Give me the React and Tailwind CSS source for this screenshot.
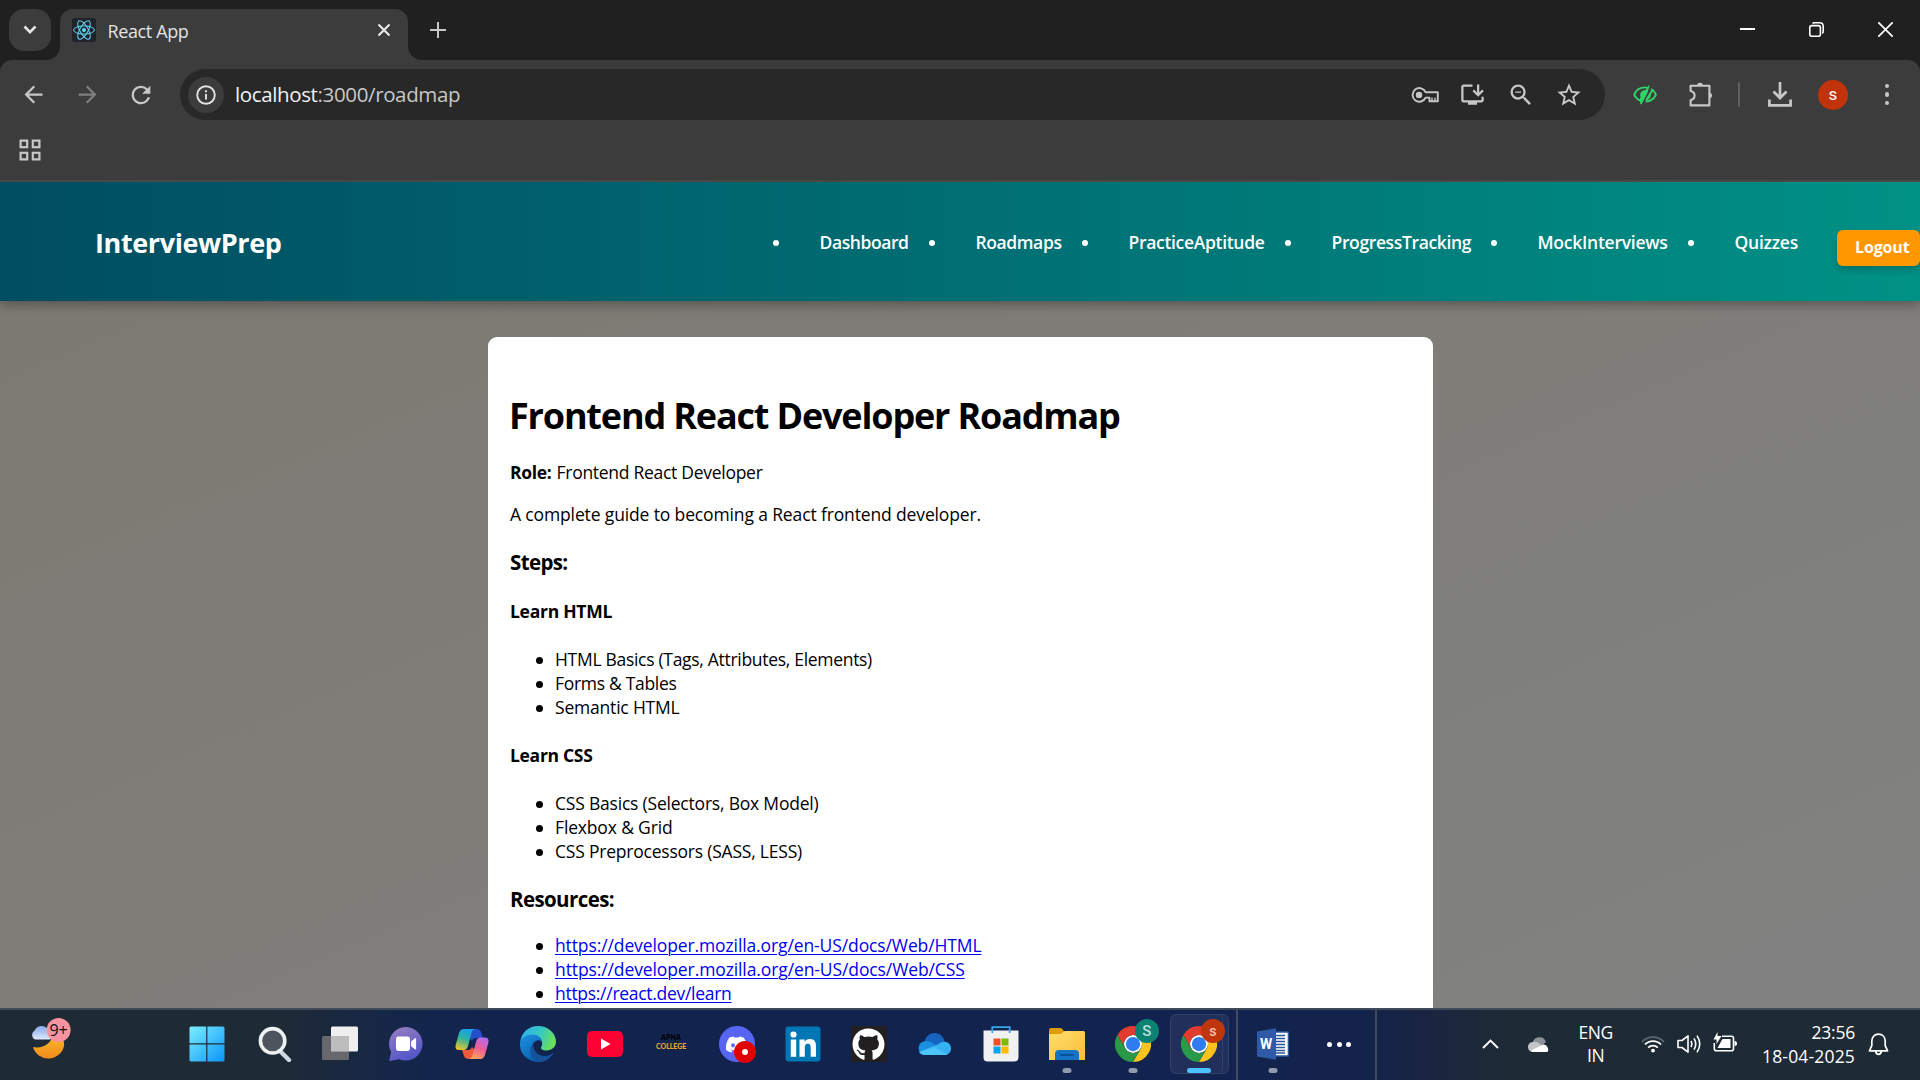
import { FaDiscord, FaGithub } from "react-icons/fa";
import {
  MdInstallDesktop,
  MdStarBorder,
  MdZoomOut,
  MdArrowBack,
  MdArrowForward,
  MdRefresh,
} from "react-icons/md";

/* ---------- browser chrome ---------- */

function ReactLogo() {
  return (
    <svg viewBox="0 0 24 24" className="h-6 w-6 rounded-[3px] bg-[#20232a]">
      <g fill="none" stroke="#61dafb" strokeWidth="1">
        <ellipse cx="12" cy="12" rx="10.4" ry="4.1" />
        <ellipse cx="12" cy="12" rx="10.4" ry="4.1" transform="rotate(60 12 12)" />
        <ellipse cx="12" cy="12" rx="10.4" ry="4.1" transform="rotate(120 12 12)" />
      </g>
      <circle cx="12" cy="12" r="2" fill="#61dafb" />
    </svg>
  );
}

function TabFlare({ flip }) {
  return (
    <svg viewBox="0 0 14 14" className={flip ? "h-3.5 w-3.5 self-end -scale-x-100" : "h-3.5 w-3.5 self-end"}>
      <path d="M14 0V14H0A14 14 0 0 0 14 0Z" fill="#3c3c3c" />
    </svg>
  );
}

function TabStrip() {
  return (
    <div className="flex h-[60px] bg-[#202020]">
      <div className="ml-[9px] mt-[9px] flex h-[42px] w-[42px] items-center justify-center rounded-[15px] bg-[#3c3c3c]">
        <svg viewBox="0 0 14 10" className="h-[10px] w-[14px]" fill="none" stroke="#e6e6e6" strokeWidth="2.6">
          <path d="M1.5 1.5L7 7.2L12.5 1.5" />
        </svg>
      </div>
      <div className="-ml-[5px] flex">
        <TabFlare />
        <div className="mt-[9px] flex h-[51px] w-[348px] items-center rounded-t-[13px] bg-[#3c3c3c] pb-[9px] pl-3">
          <ReactLogo />
          <span className="ml-[11.5px] mt-[2px] text-[18px] leading-6 tracking-[-0.0206em] text-[#e3e3e3]">React App</span>
          <svg viewBox="0 0 14 14" className="ml-auto mr-[17px] h-[14px] w-[14px]" stroke="#e6e6e6" strokeWidth="2.2">
            <path d="M1.5 1.5L12.5 12.5M12.5 1.5L1.5 12.5" />
          </svg>
        </div>
        <TabFlare flip />
      </div>
      <svg viewBox="0 0 16 16" className="ml-2 mt-[22px] h-4 w-4" stroke="#c7c7c7" strokeWidth="2">
        <path d="M8 0V16M0 8H16" />
      </svg>
      <div className="ml-auto mr-[27px] flex h-[59px] items-center gap-[54px]">
        <svg viewBox="0 0 15 15" className="h-[15px] w-[15px]" stroke="#fff" strokeWidth="2">
          <path d="M0 7H15" />
        </svg>
        <svg viewBox="0 0 15 15" className="h-[15px] w-[15px]" fill="none" stroke="#fff" strokeWidth="1.6">
          <rect x="0.8" y="3.6" width="10.6" height="10.6" rx="2" />
          <path d="M3.6 1.6Q4.2 0.8 5.4 0.8H10.6Q14.2 0.8 14.2 4.4V9.6Q14.2 10.8 13.2 11.4" />
        </svg>
        <svg viewBox="0 0 15 15" className="h-[15px] w-[15px]" stroke="#fff" strokeWidth="1.7">
          <path d="M0.3 0.3L14.7 14.7M14.7 0.3L0.3 14.7" />
        </svg>
      </div>
    </div>
  );
}

function Toolbar() {
  return (
    <div className="bg-[#202020]">
      <div className="h-[122px] rounded-t-[12px] border-b-2 border-[#4a4846] bg-[#3c3c3c] pt-[9px]">
        <div className="flex h-[51px] items-center">
          <MdArrowBack className="ml-[20px] h-[27px] w-[27px] text-[#c7c7c7]" />
          <MdArrowForward className="ml-[27px] h-[27px] w-[27px] text-[#7f7f7f]" />
          <MdRefresh className="ml-[26px] h-[28px] w-[28px] text-[#c7c7c7]" />
          <div className="ml-[25px] flex h-[51px] w-[1425px] items-center rounded-full bg-[#282828] text-[#c7c7c7]">
            <div className="ml-[8px] flex h-9 w-9 items-center justify-center rounded-full bg-[#3c3c3c]">
              <svg viewBox="0 0 20 20" className="h-5 w-5" fill="none" stroke="#e3e3e3" strokeWidth="1.9">
                <circle cx="10" cy="10" r="8.8" />
                <path d="M10 9V14.6M10 5.2V7.2" />
              </svg>
            </div>
            <span className="ml-[11px] -mt-px text-[20.5px] leading-7 tracking-[-0.018em] text-[#c7c7c7]">
              <span className="text-[#f1f1f1]">localhost</span>:3000/roadmap
            </span>
            <div className="ml-auto mr-[22px] flex items-center">
              <svg viewBox="0 0 28 16" className="h-4 w-7" fill="none" stroke="#c7c7c7" strokeWidth="1.9" strokeLinejoin="round">
                <path d="M14.6 5.2A6.8 6.8 0 1 0 14.6 10.6H18.5V14.2H26.8V5.2Z" />
                <path d="M21 14V10.4M24 14V10.4" strokeWidth="1.4" />
                <circle cx="8" cy="7.9" r="3.2" fill="#c7c7c7" stroke="none" />
              </svg>
              <MdInstallDesktop className="ml-[20px] h-[27px] w-[27px]" />
              <MdZoomOut className="ml-[21px] h-[28px] w-[28px]" />
              <MdStarBorder className="ml-[20px] h-[28px] w-[28px]" />
            </div>
          </div>
          <svg viewBox="0 0 24 20" className="ml-[28px] h-5 w-6" fill="none" stroke="#2fd566" strokeWidth="1.9">
            <path d="M7.6 15.8C4.8 14.7 2.4 12.4 1.2 9.7C3 5 7.5 2.4 12 2.4C13 2.4 14 2.5 14.8 2.8M18 4C20.2 5.2 21.9 7.2 22.9 9.7C21 14.3 17.2 16.4 12.6 16.6" />
            <path d="M16 0.6L13.8 8.4L8 19.2L7.2 14Z" fill="#2fd566" strokeWidth="1" />
            <path d="M20 4.2L13 15.6M17 9.5Q17 13 13.2 14.5" />
            <path d="M13 5.2C9.6 5 7.2 7 7.2 10C7.2 11.8 7.8 13 8.8 13.8L12.8 7.6Z" fill="#2fd566" stroke="none" />
          </svg>
          <svg viewBox="0 0 26 26" className="ml-[31px] h-[26px] w-[26px]" fill="none" stroke="#c7c7c7" strokeWidth="2.1">
            <path d="M2.6 3.8H21.4V23.4H2.6V18.2C5.2 17.6 6.6 15.8 6.6 13.6C6.6 11.4 5.2 9.6 2.6 9Z" strokeLinejoin="round" />
            <path d="M8.9 3.2A3.2 3.2 0 0 1 15.1 3.2ZM22 10.6A3.2 3.2 0 0 1 22 16.6Z" fill="#c7c7c7" stroke="none" />
          </svg>
          <div className="ml-[24px] h-[25px] w-[2px] rounded bg-[#5f5f5f]" />
          <svg viewBox="0 0 24 25" className="ml-[28px] h-[25px] w-6" fill="none" stroke="#c7c7c7" strokeWidth="2.7">
            <path d="M12 0V15M5.5 9.5L12 16L18.5 9.5M1.4 17.5V23.4H22.6V17.5" />
          </svg>
          <div className="ml-[26px] flex h-[30px] w-[30px] items-center justify-center rounded-full bg-[#c0330b] text-[17px] leading-none text-white [font-family:Roboto,sans-serif]">
            s
          </div>
          <div className="ml-[36.5px] flex flex-col gap-1">
            <i className="h-[4.5px] w-[4.5px] rounded-full bg-[#c7c7c7]" />
            <i className="h-[4.5px] w-[4.5px] rounded-full bg-[#c7c7c7]" />
            <i className="h-[4.5px] w-[4.5px] rounded-full bg-[#c7c7c7]" />
          </div>
        </div>
        <svg viewBox="0 0 22 22" className="ml-[19px] mt-[19px] h-[22px] w-[22px]" fill="none" stroke="#c7c7c7" strokeWidth="2.2">
          <rect x="1.6" y="1.6" width="6.6" height="6.6" />
          <rect x="13.8" y="1.6" width="6.6" height="6.6" />
          <rect x="1.6" y="13.8" width="6.6" height="6.6" />
          <rect x="13.8" y="13.8" width="6.6" height="6.6" />
        </svg>
      </div>
    </div>
  );
}

/* ---------- web page ---------- */

const NAV = [
  ["Dashboard", "w-[156px]", "tracking-[-0.0241em]"],
  ["Roadmaps", "w-[153px]", "tracking-[-0.0226em]"],
  ["PracticeAptitude", "w-[203px]", "tracking-[-0.0179em]"],
  ["ProgressTracking", "w-[206px]", "tracking-[-0.021em]"],
  ["MockInterviews", "w-[197px]", "tracking-[-0.0148em]"],
  ["Quizzes", "w-[149px]", "tracking-[-0.0132em]"],
];

function Header() {
  return (
    <header className="relative flex h-[119px] items-center bg-linear-to-r from-[#004d61] to-[#009185] pt-[1px] text-white shadow-[0_4px_10px_rgba(0,0,0,0.3)]">
      <h1 className="ml-[95px] mt-px w-[678px] text-[27px] font-bold leading-9 tracking-[-0.0145em]">InterviewPrep</h1>
      <ul className="flex">
        {NAV.map(([label, width, tracking]) => (
          <li key={label} className={`${width} flex items-center`}>
            <i className="mt-px h-1.5 w-1.5 rounded-full bg-white" />
            <a className={`${tracking} ml-[40.5px] text-[17.5px] font-semibold leading-6`}>{label}</a>
          </li>
        ))}
      </ul>
      <button className="mt-[11px] h-9 w-[83px] rounded-[6px] bg-[#ff9800] pb-px pl-[18px] text-left text-[16px] font-bold tracking-[-0.0089em] shadow-[0_4px_6px_rgba(0,0,0,0.2)]">
        Logout
      </button>
    </header>
  );
}

function Bullets({ items, link, className }) {
  return (
    <ul className={`${className} text-[17.5px] leading-6`}>
      {items.map(([text, tracking]) => (
        <li key={text} className="flex items-center">
          <i className="ml-[25.5px] mt-[2px] h-[7px] w-[7px] rounded-full bg-black" />
          <span
            className={
              link
                ? `${tracking} ml-[12.5px] text-[#0000ee] underline decoration-1 underline-offset-2`
                : `${tracking} ml-[12.5px]`
            }
          >
            {text}
          </span>
        </li>
      ))}
    </ul>
  );
}

const HTML_TOPICS = [
  ["HTML Basics (Tags, Attributes, Elements)", "tracking-[-0.0171em]"],
  ["Forms & Tables", "tracking-[-0.0173em]"],
  ["Semantic HTML", "tracking-[-0.0113em]"],
];
const CSS_TOPICS = [
  ["CSS Basics (Selectors, Box Model)", "tracking-[-0.0117em]"],
  ["Flexbox & Grid", "tracking-[-0.0089em]"],
  ["CSS Preprocessors (SASS, LESS)", "tracking-[-0.0122em]"],
];
const RESOURCES = [
  ["https://developer.mozilla.org/en-US/docs/Web/HTML", "tracking-[-0.0064em]"],
  ["https://developer.mozilla.org/en-US/docs/Web/CSS", "tracking-[-0.006em]"],
  ["https://react.dev/learn", "tracking-[-0.0165em]"],
];

function RoadmapCard() {
  return (
    <article className="mx-auto mt-9 h-[700px] w-[945px] rounded-[9px] bg-white pl-[22.5px] pt-[55px] text-[17.5px] leading-6 text-black">
      <h2 className="-ml-[1px] text-[36px] font-bold leading-[48px] tracking-[-0.0325em]">Frontend React Developer Roadmap</h2>
      <p className="mt-[20px] tracking-[-0.016em]">
        <b className="mr-[5px] tracking-[-0.0178em]">Role:</b>Frontend React Developer
      </p>
      <p className="mt-[18px] tracking-[-0.0078em]">A complete guide to becoming a React frontend developer.</p>
      <h3 className="mt-[22px] text-[20.5px] font-bold leading-7 tracking-[-0.031em]">Steps:</h3>
      <h4 className="mt-[23px] font-bold tracking-[-0.0154em]">Learn HTML</h4>
      <Bullets className="mt-6" items={HTML_TOPICS} />
      <h4 className="mt-6 font-bold tracking-[-0.0173em]">Learn CSS</h4>
      <Bullets className="mt-6" items={CSS_TOPICS} />
      <h3 className="mt-[22px] text-[20.5px] font-bold leading-7 tracking-[-0.0293em]">Resources:</h3>
      <Bullets className="mt-[20px]" items={RESOURCES} link />
    </article>
  );
}

/* ---------- taskbar icons ---------- */

function Weather() {
  return (
    <svg viewBox="0 0 42 42" className="h-[42px] w-[42px]">
      <defs>
        <linearGradient id="moon" x1="0" y1="0" x2="0" y2="1">
          <stop offset="0" stopColor="#fbc02d" />
          <stop offset="1" stopColor="#f28a1c" />
        </linearGradient>
        <linearGradient id="cloud" x1="0" y1="0" x2="0" y2="1">
          <stop offset="0" stopColor="#86a9ee" />
          <stop offset="1" stopColor="#dfe9fb" />
        </linearGradient>
      </defs>
      <path d="M3 29C12 31 23 26 23 14C30 16 35 21 34 28A16 16 0 0 1 3 29Z" fill="url(#moon)" />
      <path d="M5 21.5A5 5 0 0 1 4.6 12.6A7.6 7.6 0 0 1 18 11.5A5.5 5.5 0 0 1 20 21.5Z" fill="url(#cloud)" />
      <circle cx="28.6" cy="12" r="12" fill="#f8949f" />
      <text x="28.6" y="17.6" textAnchor="middle" fontSize="16" fill="#111" className="[font-family:'Open_Sans',sans-serif]">
        9+
      </text>
    </svg>
  );
}

function Start() {
  return (
    <svg viewBox="0 0 36 36" className="h-9 w-9">
      <defs>
        <linearGradient id="win" gradientUnits="userSpaceOnUse" x1="0" y1="0" x2="36" y2="36">
          <stop offset="0" stopColor="#7df0ff" />
          <stop offset="1" stopColor="#0a93fa" />
        </linearGradient>
      </defs>
      <path
        d="M2 0.5H17.2V17.2H0.5V2Q0.5 0.5 2 0.5ZM18.4 0.5H34Q35.5 0.5 35.5 2V17.2H18.4ZM0.5 18.4H17.2V35.5H2Q0.5 35.5 0.5 34ZM18.4 18.4H35.5V34Q35.5 35.5 34 35.5H18.4Z"
        fill="url(#win)"
      />
    </svg>
  );
}

function Search() {
  return (
    <svg viewBox="0 0 36 36" className="ml-[2px] h-9 w-9">
      <path d="M24 26L32 34" stroke="#cfd8e2" strokeWidth="4.4" strokeLinecap="round" />
      <circle cx="15.6" cy="14.8" r="12.2" fill="#4c555d" stroke="#eef1f4" strokeWidth="3.6" />
    </svg>
  );
}

function TaskView() {
  return (
    <svg viewBox="0 0 36 36" className="ml-px h-9 w-9">
      <rect x="9" y="0.5" width="27" height="25" rx="1.5" fill="#efefef" />
      <rect x="0" y="10" width="27" height="24" rx="1.5" fill="#6f6f70" fillOpacity="0.9" />
      <path d="M9 10H25.5Q27 10 27 11.5V25.5H9Z" fill="#bdbdbd" />
    </svg>
  );
}

function Chat() {
  return (
    <svg viewBox="0 0 36 36" className="h-9 w-9">
      <defs>
        <linearGradient id="chat" x1="0" y1="0" x2="0.4" y2="1">
          <stop offset="0" stopColor="#9b7fbf" />
          <stop offset="1" stopColor="#5457c9" />
        </linearGradient>
      </defs>
      <path d="M18 1A16.8 16.8 0 1 1 11 33.2L2 35Q1 35 1.4 33.8L3.2 26A16.8 16.8 0 0 1 18 1Z" fill="url(#chat)" />
      <rect x="8" y="10.5" width="14" height="14.5" rx="2.4" fill="#fff" />
      <path d="M23.6 15.4L27.6 12.4V23.2L23.6 20.2Z" fill="#fff" stroke="#fff" strokeLinejoin="round" />
    </svg>
  );
}

function Copilot() {
  return (
    <svg viewBox="0 0 36 36" className="ml-px h-9 w-9">
      <defs>
        <linearGradient id="cpA" x1="0.5" y1="0" x2="0.2" y2="1">
          <stop offset="0" stopColor="#1b9fe8" />
          <stop offset="0.45" stopColor="#31b49c" />
          <stop offset="1" stopColor="#f0c52c" />
        </linearGradient>
        <linearGradient id="cpB" x1="0.7" y1="0" x2="0.3" y2="1">
          <stop offset="0" stopColor="#b46bf0" />
          <stop offset="0.5" stopColor="#ee5f94" />
          <stop offset="1" stopColor="#fba35b" />
        </linearGradient>
      </defs>
      <path d="M8 3H23Q26 3 27 6L29 12H22Q19 12 18 15Z" fill="#2350c8" />
      <path d="M28 33H15Q11 33 10 30L8 24H14Q17 24 18 21Z" fill="#ee5a3c" />
      <path d="M10 3H21Q18.5 3.4 17.5 7L14 20Q13 24 9.5 24H5Q0.5 24 1.7 19L5 7Q6.3 3 10 3Z" fill="url(#cpA)" />
      <path d="M26 33H15Q17.5 32.6 18.5 29L22 16Q23 11.5 26.5 11.5H31Q35.5 11.5 34.3 17L31 29Q29.7 33 26 33Z" fill="url(#cpB)" />
    </svg>
  );
}

function Edge() {
  return (
    <svg viewBox="0 0 36 36" className="ml-px h-9 w-9">
      <defs>
        <linearGradient id="edA" x1="0" y1="0.3" x2="1" y2="0.6">
          <stop offset="0" stopColor="#2cb2ee" />
          <stop offset="0.5" stopColor="#35c8c4" />
          <stop offset="1" stopColor="#6ee24f" />
        </linearGradient>
        <linearGradient id="edB" x1="0" y1="0" x2="0.6" y2="1">
          <stop offset="0" stopColor="#1b93e0" />
          <stop offset="1" stopColor="#0c5fb0" />
        </linearGradient>
      </defs>
      <path d="M0.2 16C1.5 6 9 0 18 0C29 0 36 8 36 15.5C36 21 32 24.5 26.5 24.5C22.5 24.5 20.5 23 21 21.5C22 19.5 22.5 18.5 22 16C20 9 7 7 0.2 16Z" fill="url(#edA)" />
      <path d="M0 18C0.5 12 6 8.5 12 8.5C18 8.5 22 12 22.2 16C20 13.5 16 13.5 13.5 17C9.5 23 14 33.5 22 35.5C10 38 -0.5 29 0 18Z" fill="url(#edB)" />
      <path d="M13.5 17C12 25 19 31 26 30C29 29.5 31.5 28 33.4 26.7C31 32 26 35.5 20 36C10 34.5 7.5 23 13.5 17Z" fill="#14529b" />
    </svg>
  );
}

function YouTube() {
  return (
    <svg viewBox="0 0 36 26" className="ml-px h-[26px] w-9">
      <rect width="36" height="26" rx="5" fill="#ff0033" />
      <path d="M14 7.5V18.5L23.5 13Z" fill="#fff" />
    </svg>
  );
}

function ApnaCollege() {
  return (
    <div className="-mt-1 ml-0.5 flex flex-col items-center [font-family:Lato,sans-serif]">
      <span className="text-[7px] font-black leading-[9px] tracking-[0.02em] text-black">APNA</span>
      <span className="text-[7px] font-black leading-[9px] tracking-[-0.01em] text-[#e8a92c]">COLLEGE</span>
    </div>
  );
}

function Discord() {
  return (
    <div className="relative ml-px flex h-9 w-9 items-center justify-center rounded-full bg-[#5865f2]">
      <FaDiscord className="h-[23px] w-[23px] text-white" />
      <span className="absolute -bottom-px -right-px flex h-[22px] w-[22px] items-center justify-center rounded-full bg-[#e00000]">
        <i className="h-1.5 w-1.5 rounded-full bg-white" />
      </span>
    </div>
  );
}

function LinkedIn() {
  return (
    <svg viewBox="0 0 36 36" className="ml-px h-9 w-9">
      <rect x="0.5" y="0.5" width="35" height="35" rx="3" fill="#0077b5" />
      <g fill="#fff">
        <circle cx="8.5" cy="8.5" r="3.1" />
        <rect x="5.8" y="13.5" width="5.4" height="17.3" />
        <path d="M14.5 13.5H19.6V15.9C20.5 14.3 22.4 13.1 24.9 13.1C29.9 13.1 31 16.4 31 20.9V30.8H25.7V22.2C25.7 20 25.5 17.7 22.9 17.7C20.3 17.7 19.8 19.8 19.8 22V30.8H14.5Z" />
      </g>
    </svg>
  );
}

function GitHub() {
  return (
    <div className="ml-px flex h-9 w-9 items-center justify-center bg-[#221f20]">
      <FaGithub className="h-[33px] w-[33px] text-white" />
    </div>
  );
}

function OneDrive() {
  return (
    <svg viewBox="0 0 36 36" className="h-9 w-9">
      <path d="M8 17C9.5 10 14 7 18.5 7C24 7 28 11 28.5 16L20 22Z" fill="#1565c0" />
      <path d="M7.5 29A7 7 0 0 1 8 15.5C13 14.5 17 17 20 19.5L30 27L28 29Z" fill="#1b90e0" />
      <path d="M17 21L25 16.5C30 14.5 35 17.5 35 22.5C35 26.5 32 29 28.5 29Z" fill="#37b1f2" />
      <path d="M3 26L17.5 20.5L31.5 28.4Q30 29 28.5 29H8Q5 29 3 26Z" fill="#4ac4fb" />
    </svg>
  );
}

function Store() {
  return (
    <svg viewBox="0 0 36 36" className="h-9 w-9">
      <path d="M0.5 4.5H35.5V31.5Q35.5 35.5 31.5 35.5H4.5Q0.5 35.5 0.5 31.5Z" fill="#f1f1f2" />
      <path d="M9.3 7V1.2H26.7V7" fill="none" stroke="#36a9ec" strokeWidth="1.8" />
      <path d="M10.5 12.5H17.5V19.5H10.5Z" fill="#f25022" />
      <path d="M18.5 12.5H25.5V19.5H18.5Z" fill="#7fba00" />
      <path d="M10.5 20.5H17.5V27.5H10.5Z" fill="#00a4ef" />
      <path d="M18.5 20.5H25.5V27.5H18.5Z" fill="#ffb900" />
    </svg>
  );
}

function Folder() {
  return (
    <svg viewBox="0 0 36 36" className="h-9 w-9">
      <defs>
        <linearGradient id="fold" x1="0" y1="0" x2="1" y2="1">
          <stop offset="0" stopColor="#ffdf70" />
          <stop offset="1" stopColor="#f8bd36" />
        </linearGradient>
      </defs>
      <path d="M0 4Q0 2 2 2H11Q12.5 2 13.5 3.2L15.5 6L12 10H0Z" fill="#dd9b0d" />
      <path d="M0 8H11Q12.5 8 14 6.2Q15 5 16.5 5H34.5Q36 5 36 6.5V34H0Z" fill="url(#fold)" />
      <path d="M6 34V28Q6 24 10 24H26Q30 24 30 28V34Z" fill="#1373c6" />
      <path d="M11.5 29H24.5" stroke="#0a4581" strokeWidth="1.3" strokeLinecap="round" />
    </svg>
  );
}

function Chrome({ badge, letter }) {
  return (
    <div className="relative">
      <svg viewBox="0 0 48 48" className="h-9 w-9">
        <circle cx="24" cy="24" r="12" fill="#fff" />
        <path d="M24,12H44.7812a23.9939,23.9939,0,0,0-41.5639.0029L13.6079,30l.0093-.0024A11.9852,11.9852,0,0,1,24,12Z" fill="#e33b2e" />
        <circle cx="24" cy="24" r="9.5" fill="#2f7cf0" />
        <path d="M34.3913,30.0029,24.0007,48A23.994,23.994,0,0,0,44.78,12.0031H23.9989l-.0025.0093A11.985,11.985,0,0,1,34.3913,30.0029Z" fill="#fcc31e" />
        <path d="M13.6086,30.0031,3.218,12.006A23.994,23.994,0,0,0,24.0025,48L34.3931,30.0029l-.0067-.0068a11.9852,11.9852,0,0,1-20.7778.007Z" fill="#2a9a48" />
      </svg>
      <span
        className={`${badge} absolute -right-2 -top-[7px] flex h-6 w-6 items-center justify-center rounded-full font-medium leading-none [font-family:Roboto,sans-serif]`}
      >
        {letter}
      </span>
    </div>
  );
}

function Word() {
  return (
    <svg viewBox="0 0 32 32" className="h-8 w-8">
      <path d="M17 4H30.5Q31.5 4 31.5 5V27Q31.5 28 30.5 28H17Z" fill="#fff" stroke="#2b579a" strokeWidth="1.6" />
      <path d="M19 7.5H28M19 10.5H28M19 13.5H28M19 16.5H28M19 19.5H28M19 22.5H28M19 25H28" stroke="#2b579a" strokeWidth="1.3" />
      <path d="M0 3.6L19 0.3V31.7L0 28.4Z" fill="#2f5aa8" />
      <text x="9.2" y="21" textAnchor="middle" fontSize="14" fontWeight="700" fill="#fff" className="[font-family:Roboto,sans-serif]">
        W
      </text>
    </svg>
  );
}

/* ---------- taskbar ---------- */

function Cell({ children, running }) {
  return (
    <div className="relative flex h-[70px] w-[66.1px] shrink-0 items-center justify-center pb-[2px]">
      {children}
      {running && <i className="absolute bottom-[7px] left-1/2 h-[5px] w-[9px] -translate-x-1/2 rounded-full bg-[#9298ad]" />}
    </div>
  );
}

function Tray() {
  return (
    <div className="flex flex-1 items-center pb-[2px] text-white">
      <svg viewBox="0 0 17 10" className="ml-[105.5px] h-[10px] w-[17px]" fill="none" stroke="#fff" strokeWidth="1.9">
        <path d="M1 9L8.5 1.5L16 9" />
      </svg>
      <svg viewBox="0 0 24 16" className="ml-[28.5px] mt-[2px] h-4 w-6">
        <path d="M5 4.5A7 7 0 0 1 18 5L12 10Z" fill="#8d9297" />
        <path d="M5.5 15A5 5 0 0 1 4.5 5C8 4 11 5.5 13 8L18 13Z" fill="#c3c6c9" />
        <path d="M3 13.5L15 7.5A5 5 0 0 1 19.5 15H5.5Q4 15 3 13.5Z" fill="#fff" />
      </svg>
      <div className="ml-[25.5px] w-[37px] text-center text-[17.5px] leading-[23px] tracking-[-0.028em]">
        <div>ENG</div>
        <div>IN</div>
      </div>
      <svg viewBox="0 0 24 18" className="ml-[26.5px] h-[18px] w-6" fill="none" stroke="#fff" strokeWidth="1.8">
        <path d="M1 7A15 15 0 0 1 23 7" stroke="#5b656c" />
        <path d="M4 9.5A11 11 0 0 1 20 9.5M7.2 12.6A6.8 6.8 0 0 1 16.8 12.6" />
        <circle cx="12" cy="15.6" r="1.9" fill="#fff" stroke="none" />
      </svg>
      <svg viewBox="0 0 24 20" className="ml-[12px] h-5 w-6" fill="none" stroke="#fff" strokeWidth="1.6" strokeLinejoin="round">
        <path d="M1 6.5H5L11 1.8V18.2L5 13.5H1Z" />
        <path d="M14 7Q15.6 10 14 13M17 4.3Q20.5 10 17 15.7M20 1.6Q25.5 10 20 18.4" />
      </svg>
      <svg viewBox="0 0 24 20" className="-mt-1 ml-[12px] h-5 w-6" fill="none" stroke="#fff" strokeWidth="1.6">
        <path d="M9 4.3H18.5Q20.5 4.3 20.5 6.3V16.7Q20.5 18.7 18.5 18.7H3.5Q1.3 18.7 1.3 16.7V11" />
        <path d="M9.5 7H17.5V16H4.5Z" fill="#fff" stroke="none" />
        <path d="M21.5 9Q24 9 24 11.5Q24 14 21.5 14Z" fill="#fff" stroke="none" />
        <path d="M4.5 0V4H8.5L3.5 12V7.5H0.5Z" fill="#fff" stroke="none" />
      </svg>
      <div className="ml-auto text-right text-[17.5px] leading-6">
        <div className="tracking-[-0.0128em]">23:56</div>
        <div className="tracking-[0.0097em]">18-04-2025</div>
      </div>
      <svg viewBox="0 0 21 23" className="ml-[13px] mr-[31px] h-[23px] w-[21px]" fill="none" stroke="#fff" strokeWidth="1.7" strokeLinejoin="round">
        <path d="M10.5 1.2C6.2 1.2 3.8 4.4 3.8 8.2V12.6L1.4 17.8H19.6L17.2 12.6V8.2C17.2 4.4 14.8 1.2 10.5 1.2Z" />
        <path d="M7.6 18.2Q8 21.4 10.5 21.4Q13 21.4 13.4 18.2" />
      </svg>
    </div>
  );
}

function Taskbar() {
  return (
    <div className="flex h-[72px] shrink-0 border-t-2 border-[#404a58] bg-[linear-gradient(90deg,#1f2b34_0px,#1e2a35_280px,#15264a_400px,#12234e_480px,#12234f_1240px,#14234a_1370px,#1a2541_1430px,#1e2b36_1500px,#1e2a34_1920px)]">
      <div className="w-[174.4px] shrink-0 pl-[29.5px] pt-2">
        <Weather />
      </div>
      <Cell><Start /></Cell>
      <Cell><Search /></Cell>
      <Cell><TaskView /></Cell>
      <Cell><Chat /></Cell>
      <Cell><Copilot /></Cell>
      <Cell><Edge /></Cell>
      <Cell><YouTube /></Cell>
      <Cell><ApnaCollege /></Cell>
      <Cell><Discord /></Cell>
      <Cell><LinkedIn /></Cell>
      <Cell><GitHub /></Cell>
      <Cell><OneDrive /></Cell>
      <Cell><Store /></Cell>
      <Cell running><Folder /></Cell>
      <Cell running><Chrome letter="S" badge="bg-[#0b8272] text-[15px] text-[#b9e0da]" /></Cell>
      <Cell>
        <span className="absolute left-[4px] top-[4px] h-[60px] w-[59px] rounded-[6px] border border-[#33406a] bg-[#212f5b]" />
        <span className="absolute left-[4px] top-[4px] h-[60px] w-[53px] rounded-[6px] border-r border-[#33406a]" />
        <Chrome letter="s" badge="bg-[#bf360c] text-[14px] text-[#f2c4b5]" />
        <i className="absolute bottom-[7px] left-1/2 h-[5px] w-6 -translate-x-1/2 rounded-full bg-[#4cc2ff]" />
      </Cell>
      <div className="ml-[4px] w-[2px] shrink-0 bg-[#404a63]" />
      <div className="ml-[2px] flex shrink-0">
        <Cell running><Word /></Cell>
        <Cell>
          <div className="flex gap-[4.5px]">
            <i className="h-[5px] w-[5px] rounded-full bg-white" />
            <i className="h-[5px] w-[5px] rounded-full bg-white" />
            <i className="h-[5px] w-[5px] rounded-full bg-white" />
          </div>
        </Cell>
      </div>
      <div className="ml-[2.5px] w-[2px] shrink-0 bg-[#404a5c]" />
      <Tray />
    </div>
  );
}

export default function App() {
  return (
    <div className="flex h-[1080px] w-[1920px] flex-col overflow-hidden [font-family:'Open_Sans','Noto_Sans',sans-serif]">
      <TabStrip />
      <Toolbar />
      <main className="h-[826px] shrink-0 overflow-hidden bg-linear-to-br from-[#7b7970] to-[#828282]">
        <Header />
        <RoadmapCard />
      </main>
      <Taskbar />
    </div>
  );
}
